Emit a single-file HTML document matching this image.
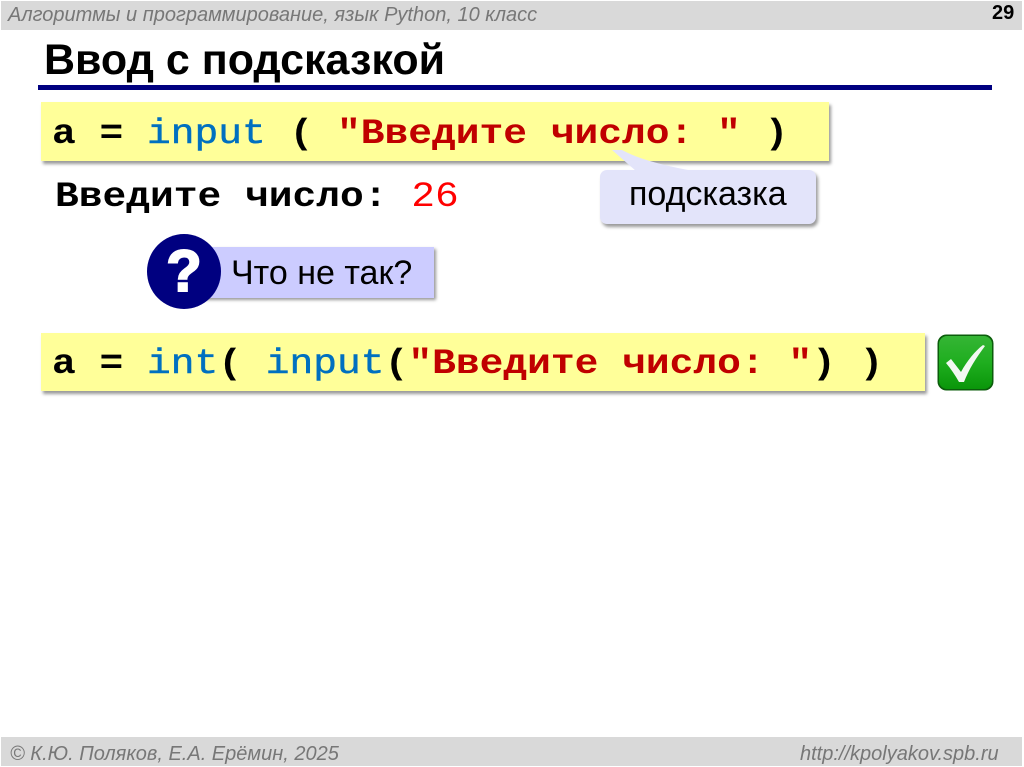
<!DOCTYPE html>
<html><head><meta charset="utf-8">
<style>
html,body{margin:0;padding:0;background:#fff}
#s{position:relative;width:1024px;height:767px;overflow:hidden;background:#fff;font-family:"Liberation Sans",sans-serif}
#s div{position:absolute;white-space:pre}
.bar{background:#d9d9d9;left:1px;width:1021px}
.g{color:#777;font-style:italic;font-size:20px;line-height:22px}
.m{font-family:"Liberation Mono",monospace;font-weight:bold;font-size:39.6px;line-height:44px;color:#000;transform:scaleY(.88);transform-origin:0 33px}
.y{background:#ffff99;box-shadow:2px 3px 3px rgba(0,0,0,.4)}
.b{color:#0070c0;font-weight:normal;-webkit-text-stroke:.5px #0070c0}.r{color:#c00000}
</style></head><body><div id="s">
<div class="bar" style="top:1px;height:29px"></div>
<div class="g" style="left:8px;top:4px">Алгоритмы и программирование, язык Python, 10 класс</div>
<div style="left:992px;top:2px;font-size:20px;font-weight:bold;line-height:22px">29</div>
<div style="left:44px;top:38px;font-size:43px;font-weight:bold;line-height:44px;color:#000">Ввод с подсказкой</div>
<div style="left:38px;top:85px;width:954px;height:5px;background:#000080"></div>

<div class="y" style="left:41px;top:102px;width:788px;height:59px"></div>
<div class="m" style="left:52px;top:111px">a = <span class="b">input</span> ( <span class="r">"Введите число: "</span> )</div>

<div class="m" style="left:55px;top:174px">Введите число: <span style="color:#f00;font-weight:normal">26</span></div>

<div style="left:600px;top:170px;width:216px;height:54px;background:#e3e4fa;border-radius:7px;box-shadow:2px 3px 3px rgba(0,0,0,.4)"></div>
<svg style="position:absolute;left:0;top:0" width="1024" height="767">
<path d="M612 150 L636 171 L694 171 C670 167 640 160 622 150 Z" fill="#e3e4fa"/>
</svg>
<div style="left:629px;top:175px;font-size:34px;line-height:38px;color:#000">подсказка</div>

<div style="left:190px;top:247px;width:244px;height:51px;background:#ccccff;box-shadow:2px 2px 3px rgba(0,0,0,.4)"></div>
<div style="left:147px;top:234px;width:74px;height:75px;border-radius:50%;background:#000080"></div>
<div style="left:147px;top:236px;width:74px;text-align:center;font-size:58px;font-weight:bold;line-height:72px;color:#fff;-webkit-text-stroke:2px #fff">?</div>
<div style="left:231px;top:254px;font-size:34px;line-height:38px;color:#000">Что не так?</div>

<div class="y" style="left:41px;top:333px;width:884px;height:58px"></div>
<div class="m" style="left:52px;top:341px">a = <span class="b">int</span>( <span class="b">input</span>(<span class="r">"Введите число: "</span>) )</div>

<svg style="position:absolute;left:937px;top:334px" width="58" height="58" viewBox="0 0 58 58">
<defs><linearGradient id="gr" x1="0" y1="0" x2="0" y2="1"><stop offset="0" stop-color="#35b535"/><stop offset=".5" stop-color="#1fae1f"/><stop offset="1" stop-color="#0a960a"/></linearGradient></defs>
<rect x=".5" y=".5" width="56" height="56" rx="9" fill="#0b5d0b"/>
<rect x="2" y="2" width="53" height="53" rx="8" fill="url(#gr)"/>
<path d="M9 29 L14 25 L24 38 C30 27 38 17 46 11 L48 12 C39 24 32 35 27 48 L22 48 C18 41 14 35 9 29 Z" fill="#f2f8f2"/>
</svg>

<div class="bar" style="top:737px;height:29px"></div>
<div class="g" style="left:10px;top:743px">© К.Ю. Поляков, Е.А. Ерёмин, 2025</div>
<div class="g" style="left:800px;top:743px;width:198px;text-align:right">http://kpolyakov.spb.ru</div>
</div></body></html>
